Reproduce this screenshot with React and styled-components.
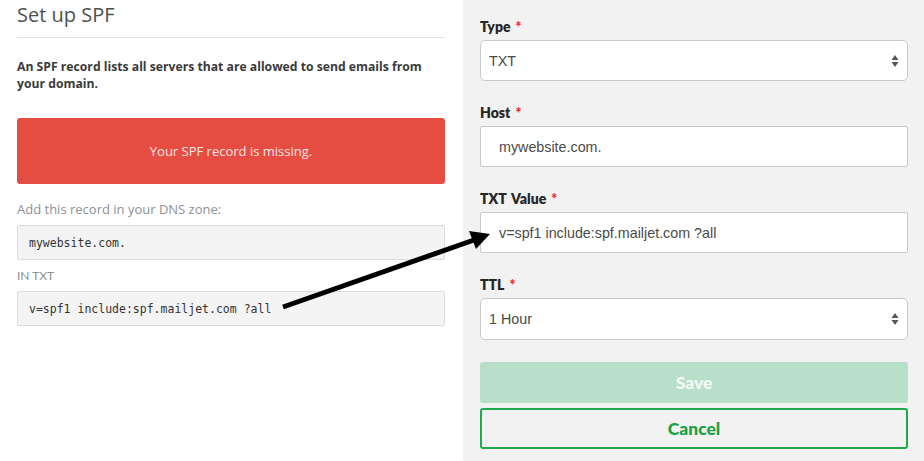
import React from 'react'
import styled, { createGlobalStyle } from 'styled-components'

const GlobalStyle = createGlobalStyle`
  html, body { margin: 0; padding: 0; background: #fff; }
  body { width: 924px; height: 461px; overflow: hidden; }
  * { box-sizing: border-box; }
`

const Page = styled.div`
  position: relative;
  display: flex;
  width: 924px;
  height: 461px;
`

// --- Left column ---
const Left = styled.section`
  width: 463px;
  padding: 0 18px 0 17px;
  background: #fff;
  font-family: 'Open Sans', 'Noto Sans', sans-serif;
`

const Title = styled.h2`
  margin: 0;
  padding-top: 1px;
  height: 38px;
  font-size: 20px;
  font-weight: 400;
  line-height: 28px;
  color: #505050;
  border-bottom: 1px solid #e3e3e3;
`

const Intro = styled.p`
  margin: 20px 0 0;
  font-size: 12.2px;
  font-weight: 700;
  line-height: 17px;
  color: #3a3a3a;
`

const Alert = styled.div`
  display: flex;
  align-items: center;
  justify-content: center;
  height: 66px;
  margin-top: 26px;
  border-radius: 3px;
  background: #e54d42;
  color: #fbe3e1;
  font-size: 13px;
`

const Hint = styled.div`
  margin-top: ${p => p.$top}px;
  font-family: ${p => (p.$caps ? "'Lato', sans-serif" : "'Open Sans', sans-serif")};
  font-size: ${p => (p.$caps ? 12 : 13)}px;
  line-height: 18px;
  color: #8c9196;
`

const Code = styled.div`
  display: flex;
  align-items: center;
  height: 35px;
  margin-top: ${p => p.$top}px;
  padding: 0 11px;
  background: #f4f4f4;
  border: 1px solid #dcdcdc;
  border-radius: 2px;
  font-family: 'DejaVu Sans Mono', 'Liberation Mono', monospace;
  font-size: 11.5px;
  color: #333;
`

// --- Right column ---
const Right = styled.section`
  flex: 1;
  padding: 17px 16px 0 17px;
  background: #f2f2f2;
`

const Field = styled.div`
  margin-bottom: ${p => p.$gap}px;
`

const Label = styled.div`
  margin-bottom: 3px;
  font-family: 'Lato', sans-serif;
  font-size: 14px;
  font-weight: 800;
  line-height: 20px;
  word-spacing: 2px;
  color: #262626;

  span {
    margin-left: 5px;
    color: #e5322d;
  }
`

const Control = styled.div`
  display: flex;
  align-items: center;
  justify-content: space-between;
  height: ${p => p.$h || 41}px;
  padding: 0 ${p => (p.$select ? 8 : 18)}px;
  background: #fff;
  border: 1px solid #c9c9c9;
  border-radius: ${p => (p.$select ? 5 : 2)}px;
  font-family: 'Liberation Sans', Arial, sans-serif;
  font-size: 14.3px;
  color: #4a4a4a;
`

const Button = styled.div`
  display: flex;
  align-items: center;
  justify-content: center;
  height: 41px;
  margin-top: ${p => p.$top}px;
  border-radius: 3px;
  font-family: 'Lato', sans-serif;
  font-size: 17.5px;
  font-weight: 900;
  background: ${p => (p.$outline ? 'transparent' : '#b8dfca')};
  border: ${p => (p.$outline ? '2px solid #1fab4b' : 'none')};
  color: ${p => (p.$outline ? '#1a9f45' : '#f4fbf7')};
`

const Overlay = styled.svg`
  position: absolute;
  left: 0;
  top: 0;
  pointer-events: none;
`

const Stepper = () => (
  <svg width="8" height="14" viewBox="0 0 8 14">
    <path d="M4 1 L7.5 6 L0.5 6 Z" fill="#555" />
    <path d="M4 13 L7.5 8 L0.5 8 Z" fill="#555" />
  </svg>
)

const fields = [
  { label: 'Type', value: 'TXT', select: true },
  { label: 'Host', value: 'mywebsite.com.' },
  { label: 'TXT Value', value: 'v=spf1 include:spf.mailjet.com ?all' },
  { label: 'TTL', value: '1 Hour', select: true, h: 42 }
]

export default function App() {
  return (
    <Page>
      <GlobalStyle />
      <Left>
        <Title>Set up SPF</Title>
        <Intro>An SPF record lists all servers that are allowed to send emails from your domain.</Intro>
        <Alert>Your SPF record is missing.</Alert>
        <Hint $top={16}>Add this record in your DNS zone:</Hint>
        <Code $top={7}>mywebsite.com.</Code>
        <Hint $top={7} $caps>IN TXT</Hint>
        <Code $top={6}>v=spf1 include:spf.mailjet.com ?all</Code>
      </Left>
      <Right>
        {fields.map((f, i) => (
          <Field key={f.label} $gap={i === fields.length - 1 ? 0 : 22}>
            <Label>
              {f.label}
              <span>*</span>
            </Label>
            <Control $select={f.select} $h={f.h}>
              {f.value}
              {f.select && <Stepper />}
            </Control>
          </Field>
        ))}
        <Button $top={22}>Save</Button>
        <Button $top={5} $outline>Cancel</Button>
      </Right>
      {/* pointer from the TXT record to the TXT Value input */}
      <Overlay width="924" height="461">
        <line x1="283" y1="307" x2="474" y2="240" stroke="#000" strokeWidth="5" />
        <polygon points="490,234 476,249 469,231" fill="#000" />
      </Overlay>
    </Page>
  )
}
